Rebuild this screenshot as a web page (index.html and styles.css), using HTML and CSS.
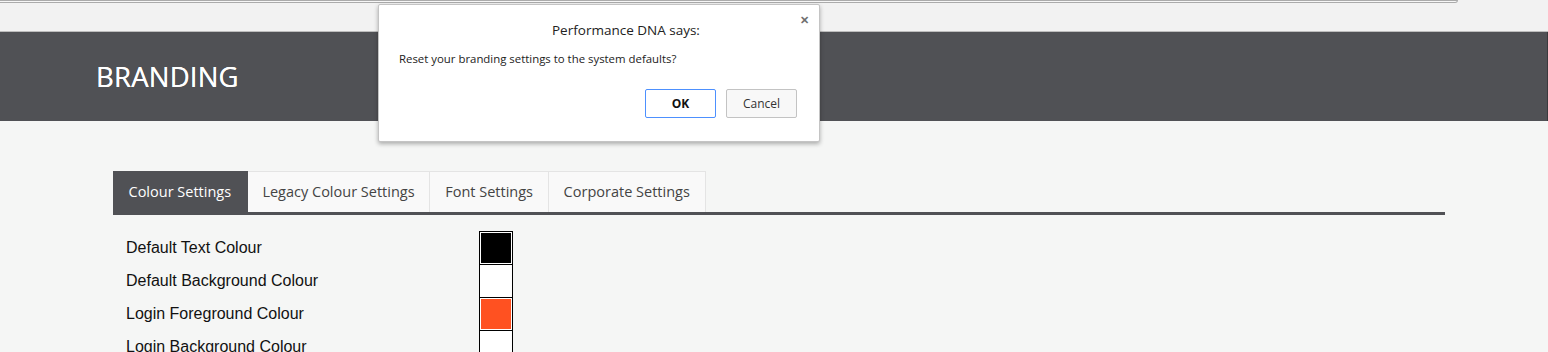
FILE: index.html
```html
<!DOCTYPE html>
<html lang="en">
<head>
    <title>Branding</title>
    <meta charset="UTF-8">
    <link rel="stylesheet" href="styles.css">
</head>
<body>
    <div class="topstrip">
        <div class="urlbar"></div>
    </div>
    <div class="header">
        <h1 class="page-title">BRANDING</h1>
    </div>
    <div class="content">
        <div class="tabs">
            <div class="tab active">Colour Settings</div>
            <div class="tab">Legacy Colour Settings</div>
            <div class="tab">Font Settings</div>
            <div class="tab">Corporate Settings</div>
        </div>
        <div class="rows">
            <div class="row">
                <span class="label">Default Text Colour</span>
                <span class="swatch black"></span>
            </div>
            <div class="row">
                <span class="label">Default Background Colour</span>
                <span class="swatch white"></span>
            </div>
            <div class="row">
                <span class="label">Login Foreground Colour</span>
                <span class="swatch orange"></span>
            </div>
            <div class="row">
                <span class="label">Login Background Colour</span>
                <span class="swatch white"></span>
            </div>
        </div>
    </div>

    <!-- confirm() box -->
    <div class="dialog">
        <span class="close">&#x2715;</span>
        <div class="dialog-title">Performance DNA says:</div>
        <div class="dialog-msg">Reset your branding settings to the system defaults?</div>
        <div class="dialog-btns">
            <button class="btn btn-ok">OK</button>
            <button class="btn">Cancel</button>
        </div>
    </div>
</body>
</html>
```

FILE: styles.css
```css
html, body {
    margin: 0;
    height: 100%;
    background: #f5f6f5;
    overflow: hidden;
}
.topstrip {
    height: 31px;
    background: #f2f2f2;
    border-bottom: 1px solid #bdbdbd;
}
.urlbar {
    width: 1457px;
    height: 1px;
    border: 1px solid #ababab;
    border-left: 0;
    border-bottom-right-radius: 3px;
    background: #f7f7f7;
}
.header {
    height: 89px;
    background: #505155;
    display: flex;
    align-items: center;
    padding-left: 96px;
    border-right: 1px solid #3a3a3d;
}
.page-title {
    margin: 0;
    color: #fff;
    font-family: "Open Sans", sans-serif;
    font-weight: 400;
    font-size: 27.5px;
    letter-spacing: 0.2px;
    text-shadow: 0 0 0.4px #fff;
}
.content {
    padding: 50px 0 0 113px;
}
.tabs {
    display: flex;
    width: 1332px;
    border-bottom: 3px solid #505155;
}
.tab {
    height: 40px;
    line-height: 40px;
    padding: 0 14.8px;
    background: #f9f9f9;
    border: 1px solid #e4e4e4;
    border-bottom: 0;
    border-left: 0;
    font-family: "Open Sans", sans-serif;
    font-size: 14.5px;
    color: #444;
}
.tab.active {
    background: #505155;
    border-color: #505155;
    color: #fff;
    padding: 0 15.5px;
}
.rows {
    padding: 16px 0 0 13px;
}
.row {
    display: flex;
    align-items: center;
    height: 33px;
}
.label {
    width: 353px;
    font-family: "Liberation Sans", Arial, sans-serif;
    font-size: 16px;
    color: #111;
}
.swatch {
    box-sizing: border-box;
    width: 34px;
    height: 34px;
    border: 1px solid #000;
    padding: 1px;
    background-clip: content-box;
    box-shadow: inset 0 0 0 1px #fff;
}
.black { background-color: #000; }
.white { background-color: #fff; }
.orange { background-color: #ff5121; }

.dialog {
    position: absolute;
    left: 378px;
    top: 4px;
    width: 440px;
    height: 136px;
    background: #fff;
    border: 1px solid #c4c4c4;
    border-radius: 2px;
    box-shadow: 0 2px 4px rgba(0, 0, 0, 0.3);
    font-family: "Open Sans", sans-serif;
}
.close {
    position: absolute;
    right: 10px;
    top: 7px;
    font-size: 11px;
    font-weight: 700;
    color: #6f6f6f;
}
.dialog-title {
    margin: 16px 0 0 173px;
    font-size: 13.5px;
    color: #222;
}
.dialog-msg {
    margin: 12px 0 0 20px;
    font-size: 11.4px;
    color: #222;
}
.dialog-btns {
    display: flex;
    justify-content: flex-end;
    gap: 10px;
    margin: 23px 22px 0 0;
}
.btn {
    width: 71px;
    height: 29px;
    background: #f8f8f8;
    border: 1px solid #c3c3c3;
    border-radius: 2px;
    font-family: "Open Sans", sans-serif;
    font-size: 12px;
    color: #333;
}
.btn-ok {
    background: #fff;
    border-color: #4d90fe;
    font-weight: 700;
    color: #111;
}
```
